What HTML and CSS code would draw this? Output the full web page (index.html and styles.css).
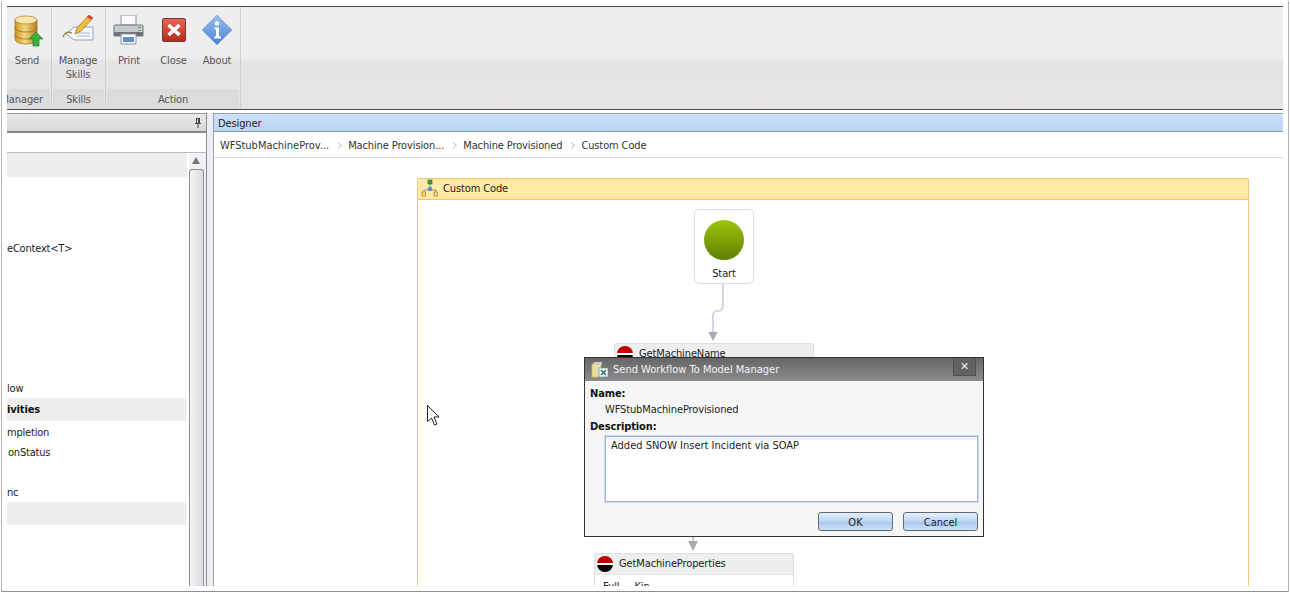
FILE: index.html
```html
<!DOCTYPE html>
<html lang="en">
<head>
<meta charset="utf-8">
<title>Send Workflow To Model Manager</title>
<link rel="stylesheet" href="styles.css">
</head>
<body>
<div class="frame">
  <header class="ribbon">
    <section class="group group-manager">
      <div class="tools">
        <div class="tool tool-send">
          <svg class="icon" width="32" height="32" viewBox="0 0 32 32">
            <defs><linearGradient id="db" x1="0" x2="1" y1="0" y2="0"><stop offset="0" stop-color="#c9932c"/><stop offset=".45" stop-color="#f6d77e"/><stop offset="1" stop-color="#b27c1e"/></linearGradient></defs>
            <path d="M4 5v19c0 3 5 5 11 5s11-2 11-5V5z" fill="url(#db)" stroke="#9b7020" stroke-width=".7"/>
            <ellipse cx="15" cy="5" rx="11" ry="4" fill="#f8e6a8" stroke="#a67c25" stroke-width=".7"/>
            <path d="M4 12c0 3 5 5 11 5s11-2 11-5M4 19c0 3 5 5 11 5s11-2 11-5" fill="none" stroke="#9b7020" stroke-width=".8"/>
            <path d="M25 17l7 7h-4v7h-6v-7h-4z" fill="#3fae3a" stroke="#1f7f24" stroke-width=".7"/>
          </svg>
          <span>Send</span>
        </div>
      </div>
      <div class="group-label label-manager"><span>Manager</span></div>
    </section>
    <section class="group group-skills">
      <div class="tools">
        <div class="tool tool-skills">
          <svg class="icon" width="32" height="32" viewBox="0 0 32 32">
            <path d="M12 12l19 0 0 13-19 0-8-6z" fill="#f4f7fb" stroke="#8ea3bf"/>
            <path d="M15 18h13M15 21h13" stroke="#a9bad0"/>
            <path d="M1 22c2-5 5-6 9-4" fill="none" stroke="#a5762a" stroke-width="1.2"/>
            <path d="M27 0l4 3-12 13-6 3 2-6z" fill="#f3bd3c" stroke="#9a6a1a" stroke-width=".7"/>
            <path d="M27 0l4 3-2 2-4-3z" fill="#d8443a"/>
          </svg>
          <span>Manage<br>Skills</span>
        </div>
      </div>
      <div class="group-label">Skills</div>
    </section>
    <section class="group group-action">
      <div class="tools">
        <div class="tool tool-print">
          <svg class="icon" width="32" height="32" viewBox="0 0 32 32">
            <path d="M8 0h15v10H8z" fill="#fbfbfd" stroke="#8c929b"/>
            <path d="M2 10h27a1 1 0 0 1 1 1v10H1V11a1 1 0 0 1 1-1z" fill="#c5c8cc" stroke="#71767c"/>
            <path d="M1 17h29v4H1z" fill="#6f7379"/>
            <path d="M8 19h15v10H8z" fill="#fff" stroke="#8095b8"/>
            <path d="M10 22h11v5H10z" fill="#5d8fd0"/>
            <path d="M25 12h3v1h-3zM25 15h3v1h-3z" fill="#5cab57"/>
          </svg>
          <span>Print</span>
        </div>
        <div class="tool tool-close">
          <svg class="icon" width="32" height="32" viewBox="0 0 32 32">
            <defs><linearGradient id="red" x1="0" x2="0" y1="0" y2="1"><stop offset="0" stop-color="#e2685a"/><stop offset=".55" stop-color="#d24534"/><stop offset="1" stop-color="#a8301f"/></linearGradient></defs>
            <rect x="4.5" y="3.5" width="23" height="23" rx="1.5" fill="url(#red)" stroke="#7c3a30"/>
            <path d="M10.500 10l11 10M21.500 10l-11 10" stroke="#fff" stroke-width="3.6"/>
          </svg>
          <span>Close</span>
        </div>
        <div class="tool tool-about">
          <svg class="icon" width="32" height="32" viewBox="0 0 32 32">
            <defs><linearGradient id="blu" x1="0" x2="0" y1="0" y2="1"><stop offset="0" stop-color="#9cc0f0"/><stop offset="1" stop-color="#4a80d4"/></linearGradient></defs>
            <path d="M16 0l15 15-15 15L1 15z" fill="url(#blu)" stroke="#8fb0de" stroke-linejoin="round"/>
            <circle cx="16" cy="8.500" r="2.200" fill="#fff"/>
            <path d="M13.500 12.500h4.500v9h2v2h-7v-2h2v-7h-1.500z" fill="#fff"/>
          </svg>
          <span>About</span>
        </div>
      </div>
      <div class="group-label">Action</div>
    </section>
    <div class="ribbon-rest"></div>
  </header>
  <main class="workspace">
    <aside class="toolbox">
      <div class="toolbox-head">
        <svg width="8" height="10" viewBox="0 0 8 10"><path d="M2 0h4v5h1v1H4.500v4h-1V6H1V5h1zM3 1v4h1V1z" fill="#444"/></svg>
      </div>
      <div class="toolbox-search"></div>
      <div class="toolbox-body">
        <div class="tree">
          <div class="row-group first"></div>
          <div class="row"></div>
          <div class="row"></div>
          <div class="row"></div>
          <div class="row">eContext&lt;T&gt;</div>
          <div class="row"></div>
          <div class="row"></div>
          <div class="row"></div>
          <div class="row"></div>
          <div class="row"></div>
          <div class="row"></div>
          <div class="row">low</div>
          <div class="row-group strong">ivities</div>
          <div class="row">mpletion</div>
          <div class="row shift">onStatus</div>
          <div class="row"></div>
          <div class="row">nc</div>
          <div class="row-group"></div>
        </div>
        <div class="scrollbar">
          <div class="scroll-up"></div>
          <div class="scroll-thumb"></div>
        </div>
      </div>
    </aside>
    <section class="designer">
      <div class="designer-head">Designer</div>
      <nav class="crumbs">
        <span class="crumb-root">WFStubMachineProv...</span><i></i>
        <span>Machine Provision...</span><i></i>
        <span>Machine Provisioned</span><i></i>
        <span>Custom Code</span>
      </nav>
      <div class="canvas">
        <div class="scope">
          <div class="scope-head">
            <svg width="18" height="18" viewBox="0 0 18 18">
              <path d="M9 4v6M3 14v-3h12v3" fill="none" stroke="#8a8f9c"/>
              <rect x="7" y="1" width="4" height="4" fill="#37a24a" stroke="#1f6e30" stroke-width=".6"/>
              <circle cx="9" cy="10" r="2.200" fill="#5f86c6"/>
              <rect x="1" y="13" width="3.500" height="4" fill="#f6dc8e" stroke="#b9851f" stroke-width=".8"/>
              <rect x="13" y="13" width="3.500" height="4" fill="#f6dc8e" stroke="#b9851f" stroke-width=".8"/>
            </svg>
            <span>Custom Code</span>
          </div>
        </div>
        <div class="start-node">
          <div class="start-dot"></div>
          <span>Start</span>
        </div>
        <svg class="connector connector-top" width="24" height="60" viewBox="0 0 24 60">
          <path d="M15 0v21q0 6-5 6h-1q-4 0-4 5v16" fill="none" stroke="#d3d6e3" stroke-width="2"/>
          <path d="M.5 48h9L5 57z" fill="#a9a9ad"/>
        </svg>
        <div class="activity activity-name">
          <div class="activity-head"><span class="ball"></span><span>GetMachineName</span></div>
        </div>
        <svg class="connector connector-low" width="12" height="16" viewBox="0 0 12 16">
          <path d="M6 0v6" stroke="#c8c8cc" stroke-width="2"/>
          <path d="M1 4h10l-5 10z" fill="#a9a9ad"/>
        </svg>
        <div class="activity activity-props">
          <div class="activity-head"><span class="ball"></span><span>GetMachineProperties</span></div>
          <div class="activity-body">Full     Kin</div>
        </div>
      </div>
    </section>
  </main>
  <div class="dialog">
    <div class="dialog-title">
      <svg width="18" height="16" viewBox="0 0 18 16">
        <rect x="1" y="2" width="9" height="13" fill="#e6dfa8" stroke="#d8c830" stroke-dasharray="2 1"/>
        <rect x="3" y="0" width="8" height="3" fill="#cfcfcf"/>
        <rect x="8" y="6" width="9" height="9" fill="#f6f8fb" stroke="#6d88ad" stroke-width=".7"/>
        <path d="M10 8l5 5M15 8l-5 5" stroke="#23705a" stroke-width="1.300"/>
      </svg>
      <span class="dialog-name">Send Workflow To Model Manager</span>
      <button class="dialog-close" type="button">✕</button>
    </div>
    <div class="dialog-body">
      <div class="field-label">Name:</div>
      <div class="field-value">WFStubMachineProvisioned</div>
      <div class="field-label desc-label">Description:</div>
      <div class="textarea">Added SNOW Insert Incident via SOAP</div>
      <div class="dialog-actions">
        <button class="btn" type="button">OK</button>
        <button class="btn" type="button">Cancel</button>
      </div>
    </div>
  </div>
  <svg class="cursor" width="16" height="24" viewBox="0 0 16 24">
    <path d="M1.500 1.500v16l4-3.500 3 7 2.500-1-3-7h5z" fill="#fff" stroke="#222" stroke-width="1"/>
  </svg>
</div>
</body>
</html>
```
FILE: styles.css
```css
* { box-sizing: border-box; }
html, body { margin: 0; height: 100%; overflow: hidden; background: #fff; }
body { font-family: "DejaVu Sans Condensed", "DejaVu Sans", sans-serif; font-size: 11px; letter-spacing: -0.12px; color: #222; }
.frame { position: relative; width: 1290px; height: 594px; padding: 6px 7px 8px; background: #fff; display: flex; flex-direction: column; overflow: hidden; }
.frame::before { content: ""; position: absolute; left: 1px; right: 1px; top: 1px; bottom: 2px; border: 1px solid #b4b4b4; border-top: 0; border-bottom-color: #8f8f8f; pointer-events: none; }
.ribbon { height: 104px; flex: none; display: flex; background: linear-gradient(#eeeeee 0, #eeeeee 30%, #efecee 50%, #e4e4e4 54%, #e8e4e4 100%); border-top: 1px solid #4a4a4a; border-bottom: 1px solid #4a4a4a; }
.group { display: flex; flex-direction: column; border-right: 1px solid #cfcfcf; }
.group-manager { width: 45px; overflow: hidden; }
.group-skills { width: 54px; }
.group-action { width: 135px; }
.ribbon-rest { flex: 1; }
.tools { flex: 1; display: flex; }
.tool { display: flex; flex-direction: column; align-items: center; padding-top: 8px; text-align: center; color: #555; line-height: 14px; width: 44px; }
.tool .icon { display: block; margin-bottom: 7px; }
.tool-send { width: 40px; }
.tool-skills { width: 52px; }
.tool-print { width: 46px; }
.tool-close { width: 43px; }
.group-label { height: 20px; margin: 0 1px; background: #dcdcdc; color: #555; text-align: center; line-height: 21px; }
.label-manager { overflow: hidden; white-space: nowrap; margin: 0 1px 0 0; }
.label-manager span { float: right; padding-right: 7px; }
.workspace { flex: 1; min-height: 0; display: flex; gap: 6px; padding-top: 3px; background: linear-gradient(#fff, #fff) top / 100% 3px no-repeat, #edeef5; }
.toolbox { width: 200px; flex: none; display: flex; flex-direction: column; border-right: 1px solid #8a8a8a; background: #fff; }
.toolbox-head { height: 20px; flex: none; background: linear-gradient(#e9e9e9, #d9d9d9); border-top: 1px solid #999; border-bottom: 2px solid #888; display: flex; justify-content: flex-end; align-items: center; padding-right: 4px; }
.toolbox-search { height: 20px; flex: none; background: #fff; border-bottom: 1px solid #bbb; }
.toolbox-body { flex: 1; min-height: 0; display: flex; }
.tree { width: 181px; flex: none; }
.row { height: 20px; padding-top: 1px; line-height: 20px; white-space: nowrap; color: #222; letter-spacing: -0.2px; }
.row.shift { padding-left: 1px; }
.row-group { height: 24px; line-height: 24px; width: 180px; background: #eeeeee; background-clip: padding-box; border-bottom: 1px solid transparent; }
.row-group.first { height: 25px; }
.row-group.strong { font-weight: bold; color: #111; }
.scrollbar { width: 17px; flex: none; margin-left: 1px; background: #f1f1f5; display: flex; flex-direction: column; padding-top: 4px; }
.scroll-up { width: 0; height: 0; margin: 0 0 5px 3px; border-left: 4px solid transparent; border-right: 4px solid transparent; border-bottom: 7px solid #777; }
.scroll-thumb { flex: 1; background: linear-gradient(90deg, #f4f4f4, #dcdbdd); border: 1px solid #8f8f8f; border-bottom: 0; border-radius: 3px 3px 0 0; width: 15px; }
.designer { flex: 1; min-width: 0; display: flex; flex-direction: column; border-left: 1px solid #9aa0ad; background: #fff; }
.designer-head { height: 19px; flex: none; padding-left: 4px; line-height: 19px; color: #222; background: linear-gradient(#cfe0fb, #b9d6f3); border-top: 1px solid #9aa2ae; border-bottom: 1px solid #8e98a6; }
.crumbs { height: 26px; flex: none; display: flex; align-items: center; padding: 1px 0 0 6px; border-bottom: 1px solid #d8d9e2; color: #333; }
.crumb-root { letter-spacing: -0.02px; }
.crumbs i { width: 5px; height: 5px; margin: 0 7px; border-top: 1px solid #c6c8d2; border-right: 1px solid #c6c8d2; transform: rotate(45deg); }
.canvas { position: relative; flex: 1; min-height: 0; overflow: hidden; background: #fff; }
.scope { position: absolute; left: 203px; top: 20px; width: 832px; height: 420px; border: 1px solid #eccb70; border-bottom: 0; border-radius: 2px 2px 0 0; }
.scope-head { height: 21px; display: flex; align-items: center; gap: 4px; padding: 0 0 2px 3px; background: #ffe9a6; border-bottom: 1px solid #eccb70; color: #222; }
.start-node { position: absolute; left: 480px; top: 51px; width: 60px; height: 75px; border: 1px solid #d9dce8; border-radius: 5px; display: flex; flex-direction: column; align-items: center; padding-top: 10px; color: #222; background: #fff; }
.start-dot { width: 40px; height: 40px; border-radius: 50%; background: linear-gradient(#9cc50c, #5f7f00); margin-bottom: 7px; }
.connector { position: absolute; }
.connector-top { left: 494px; top: 126px; }
.connector-low { left: 473px; top: 379px; }
.activity { position: absolute; width: 200px; background: #fff; border: 1px solid #dcdee8; border-radius: 2px 2px 0 0; }
.activity-name { left: 400px; top: 185px; height: 60px; }
.activity-props { left: 380px; top: 395px; height: 60px; }
.activity-head { height: 21px; display: flex; align-items: center; gap: 6px; padding: 0 0 0 2px; background: #eeeeee; border-bottom: 1px solid #e4e5ec; }
.activity-head span:last-child { position: relative; top: -1px; }
.ball { width: 16px; height: 16px; border-radius: 50%; background: linear-gradient(#c00000 0 45%, #fff 45% 55%, #000 55%); }
.activity-body { padding: 5px 8px; white-space: pre; color: #222; }
.dialog { position: absolute; left: 584px; top: 357px; width: 400px; height: 180px; border: 1px solid #333; background: #f6f6f6; display: flex; flex-direction: column; }
.dialog-title { height: 23px; flex: none; display: flex; align-items: center; padding-left: 6px; gap: 4px; background: linear-gradient(#666666, #8c8c8c); position: relative; letter-spacing: 0; }
.dialog-name { color: #f4f4f4; }
.dialog-close { position: absolute; right: 7px; top: 0; width: 23px; height: 18px; padding: 0; border: 1px solid #4f4f4f; border-top: 0; background: #626262; color: #f0f0f0; font: 11px/15px "DejaVu Sans", sans-serif; }
.dialog-body { flex: 1; padding: 5px 5px 4px; display: flex; flex-direction: column; }
.field-label { font-weight: bold; color: #111; line-height: 16px; height: 16px; }
.field-value { padding-left: 15px; line-height: 16px; height: 17px; color: #222; }
.textarea { margin: 1px 0 0 15px; height: 66px; width: 373px; padding: 2px 5px; line-height: 14px; letter-spacing: 0; background: linear-gradient(#f3f3f3 0 3px, #fff 3px); color: #222; border: 1px solid #9db5d2; box-shadow: 0 0 0 1px #c9dcf4; }
.dialog-actions { flex: 1; display: flex; justify-content: flex-end; gap: 10px; padding-top: 10px; }
.btn { width: 75px; height: 19px; padding: 1px 0 0; border: 1px solid #5f6a78; border-radius: 3px; color: #222; font: inherit; background: linear-gradient(#e4effb, #bcd5f3 50%, #a9c8ef 55%, #cfe2f8); }
.cursor { position: absolute; left: 426px; top: 404px; }
```
